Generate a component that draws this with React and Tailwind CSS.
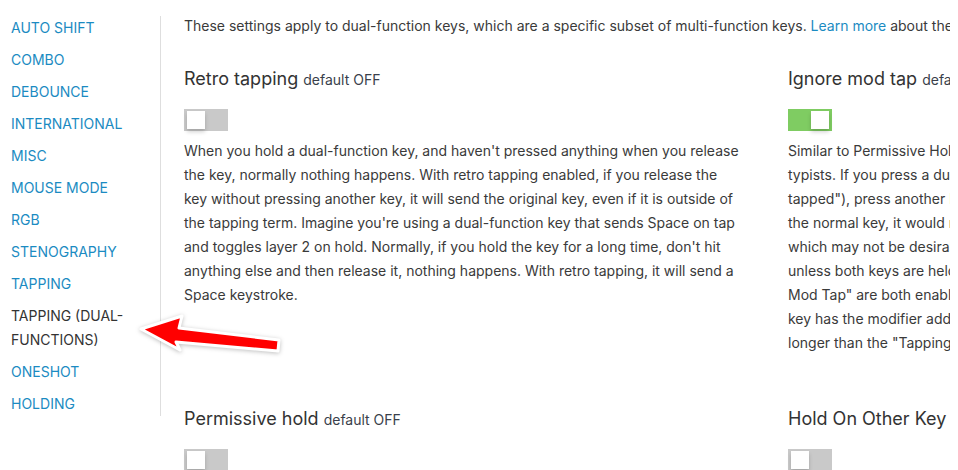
import React from 'react';

const navItems = [
  'AUTO SHIFT',
  'COMBO',
  'DEBOUNCE',
  'INTERNATIONAL',
  'MISC',
  'MOUSE MODE',
  'RGB',
  'STENOGRAPHY',
  'TAPPING',
  'TAPPING (DUAL-FUNCTIONS)',
  'ONESHOT',
  'HOLDING',
];

const settings = [
  {
    title: 'Retro tapping',
    on: false,
    lines: [
      "When you hold a dual-function key, and haven't pressed anything when you release",
      'the key, normally nothing happens. With retro tapping enabled, if you release the',
      'key without pressing another key, it will send the original key, even if it is outside of',
      "the tapping term. Imagine you're using a dual-function key that sends Space on tap",
      "and toggles layer 2 on hold. Normally, if you hold the key for a long time, don't hit",
      'anything else and then release it, nothing happens. With retro tapping, it will send a',
      'Space keystroke.',
    ],
  },
  {
    title: 'Ignore mod tap',
    on: true,
    lines: [
      'Similar to Permissive Hold, but meant for very fast',
      'typists. If you press a dual-function key (which should be',
      'tapped"), press another key, and release both before',
      'the normal key, it would normally send the modifier,',
      'which may not be desirable. This prevents the modifier',
      'unless both keys are held past the tapping term. If "Ignore',
      'Mod Tap" are both enabled, the dual-function key is only',
      'key has the modifier added if the dual-function key is held',
      'longer than the "Tapping term".',
    ],
  },
  { title: 'Permissive hold', on: false, lines: [] },
  { title: 'Hold On Other Key Press', on: false, lines: [] },
];

function Toggle({ on }) {
  return (
    <div className={`w-[44px] h-[22px] flex items-center px-[3px] ${on ? 'bg-[#7fcc62] justify-end' : 'bg-[#c9c9c9] justify-start'}`}>
      <div className="w-[18px] h-[18px] bg-white shadow-[0_3px_4px_rgba(0,0,0,0.18)]" />
    </div>
  );
}

function Setting({ s }) {
  return (
    <div className="flex flex-col">
      <h3 className="text-[18px] leading-[28px] text-[#333] whitespace-nowrap">
        {s.title} <span className="text-sm text-[#3a3f4b]">default OFF</span>
      </h3>
      <div className="mt-4">
        <Toggle on={s.on} />
      </div>
      {s.lines.length > 0 && (
        <p className="mt-2 text-sm leading-6 text-[#3a3a3a]">
          {s.lines.map((l, i) => (
            <span key={i} className="block whitespace-nowrap">{l}</span>
          ))}
        </p>
      )}
    </div>
  );
}

export default function App() {
  return (
    <div className="relative w-[958px] h-[470px] overflow-hidden bg-white" style={{ fontFamily: 'Inter, "Noto Sans", sans-serif' }}>
      {/* el contenido queda recortado a 950px, como en la captura */}
      <div className="w-[950px] h-full overflow-hidden flex">
        <nav className="mt-[16px] w-[161px] h-[400px] shrink-0 border-r border-[#dedede] pl-[11px] pr-[20px] flex flex-col gap-2">
          {navItems.map(item => (
            <a
              key={item}
              className={`text-sm leading-6 ${item === 'TAPPING (DUAL-FUNCTIONS)' ? 'text-[#333]' : 'text-[#1b8bc2]'}`}
            >
              {item}
            </a>
          ))}
        </nav>

        <main className="pt-[14px] pl-[23px] flex flex-col shrink-0">
          <p className="text-sm leading-6 text-[#3a3a3a] whitespace-nowrap">
            These settings apply to dual-function keys, which are a specific subset of multi-function keys.{' '}
            <a className="text-[#1b8bc2]">Learn more</a> about the different kinds of keys.
          </p>
          <div className="mt-[27px] grid grid-cols-[556px_556px] gap-x-[48px] gap-y-[50px]">
            {settings.map(s => <Setting key={s.title} s={s} />)}
          </div>
        </main>
      </div>

      {/* flecha roja de anotación */}
      <svg className="absolute left-0 top-0 pointer-events-none" width="958" height="470" style={{ filter: 'drop-shadow(0 1px 2px rgba(0,0,0,0.25))' }}>
        <polygon
          points="141,329 182,316 179,328 279,340 278,351 176,342 180,350"
          fill="#ff0000"
          stroke="#ffffff"
          strokeWidth="3"
          strokeLinejoin="round"
        />
      </svg>
    </div>
  );
}
